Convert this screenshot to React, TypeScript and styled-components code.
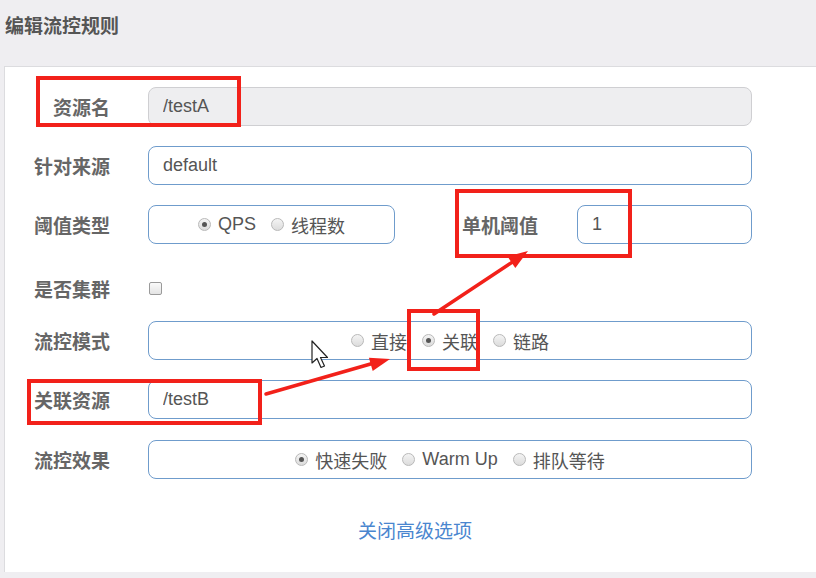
import React from "react";
import styled, { createGlobalStyle } from "styled-components";

const FONT = `"Liberation Sans", "Noto Sans CJK SC", sans-serif`;

const GlobalStyle = createGlobalStyle`
    html, body {
        margin: 0;
        padding: 0;
        background-color: #efeef1;
        overflow: hidden;
    }
    * {
        box-sizing: border-box;
    }
`;

const Page = styled.div`
    position: relative;
    width: 816px;
    height: 578px;
    font-family: ${FONT};
    background-color: #efeef1;
`;

const Header = styled.div`
    height: 66px;
    padding: 16px 5px 0;
`;

const Title = styled.h3`
    margin: 0;
    font-size: 19px;
    line-height: 22px;
    font-weight: 700;
    color: #555;
`;

const Panel = styled.div`
    margin-left: 4px;
    height: 506px;
    background-color: #fff;
    border-top: 1px solid #dcdcdf;
    border-left: 1px solid #dcdcdf;
`;

const Form = styled.form`
    padding-top: 20px;
    padding-right: 64px;
`;

const Row = styled.div<{ $height?: number; $gap?: number }>`
    display: grid;
    grid-template-columns: 105px 1fr;
    column-gap: 38px;
    align-items: center;
    height: ${(p) => p.$height ?? 39}px;
    margin-bottom: ${(p) => p.$gap ?? 20}px;
`;

const Label = styled.label`
    text-align: right;
    font-size: 19px;
    font-weight: 700;
    color: #666;
    white-space: nowrap;
`;

const Input = styled.input<{ $readOnly?: boolean }>`
    width: 100%;
    height: 39px;
    padding: 0 14px;
    border-radius: 8px;
    border: 1px solid ${(p) => (p.$readOnly ? "#cfcfd2" : "#6f9ccc")};
    background-color: ${(p) => (p.$readOnly ? "#eeeef0" : "#fff")};
    font-family: ${FONT};
    font-size: 18px;
    color: #555;
    outline: none;
`;

const SplitRow = styled.div`
    display: grid;
    grid-template-columns: 247px 1fr 175px;
    column-gap: 39px;
    align-items: center;
`;

const RadioBox = styled.div`
    height: 39px;
    border-radius: 8px;
    border: 1px solid #6f9ccc;
    display: flex;
    align-items: center;
    justify-content: center;
    gap: 15px;
`;

const RadioItem = styled.span`
    display: inline-flex;
    align-items: center;
    gap: 7px;
    font-size: 18px;
    color: #555;
`;

const RadioDot = styled.span<{ $checked?: boolean }>`
    position: relative;
    width: 13px;
    height: 13px;
    border-radius: 50%;
    border: 1px solid #b9b9b9;
    background: linear-gradient(#f4f4f4, #dcdcdc);

    &::after {
        content: "";
        display: ${(p) => (p.$checked ? "block" : "none")};
        position: absolute;
        left: 3px;
        top: 3px;
        width: 5px;
        height: 5px;
        border-radius: 50%;
        background-color: #555;
    }
`;

const CheckBox = styled.span`
    width: 13px;
    height: 13px;
    border-radius: 2px;
    border: 1px solid #9a9a9a;
    background: linear-gradient(#fafafa, #e4e4e4);
    margin-left: 1px;
`;

const LinkRow = styled.div`
    text-align: center;
    padding-left: 9px;
    margin-top: 41px;
`;

const Link = styled.a`
    font-size: 19px;
    line-height: 24px;
    color: #4a86cf;
    text-decoration: none;
`;

const RedBox = styled.div<{ $x: number; $y: number; $w: number; $h: number }>`
    position: absolute;
    left: ${(p) => p.$x}px;
    top: ${(p) => p.$y}px;
    width: ${(p) => p.$w}px;
    height: ${(p) => p.$h}px;
    border: 4px solid #f2211a;
    pointer-events: none;
`;

const Overlay = styled.svg`
    position: absolute;
    left: 0;
    top: 0;
    pointer-events: none;
`;

type Option = { text: string; checked?: boolean };

function Radios({ options }: { options: Option[] }) {
    return (
        <RadioBox>
            {options.map((o) => (
                <RadioItem key={o.text}>
                    <RadioDot $checked={o.checked} />
                    {o.text}
                </RadioItem>
            ))}
        </RadioBox>
    );
}

export default function App() {
    return (
        <Page>
            <GlobalStyle />
            <Header>
                <Title>编辑流控规则</Title>
            </Header>
            <Panel>
                <Form>
                    <Row>
                        <Label>资源名</Label>
                        <Input $readOnly readOnly value="/testA" />
                    </Row>
                    <Row>
                        <Label>针对来源</Label>
                        <Input readOnly value="default" />
                    </Row>
                    <Row>
                        <Label>阈值类型</Label>
                        <SplitRow>
                            <Radios options={[{ text: "QPS", checked: true }, { text: "线程数" }]} />
                            <Label>单机阈值</Label>
                            <Input readOnly value="1" />
                        </SplitRow>
                    </Row>
                    <Row $height={48} $gap={9}>
                        <Label>是否集群</Label>
                        <CheckBox />
                    </Row>
                    <Row>
                        <Label>流控模式</Label>
                        <Radios options={[{ text: "直接" }, { text: "关联", checked: true }, { text: "链路" }]} />
                    </Row>
                    <Row $gap={21}>
                        <Label>关联资源</Label>
                        <Input readOnly value="/testB" />
                    </Row>
                    <Row>
                        <Label>流控效果</Label>
                        <Radios
                            options={[
                                { text: "快速失败", checked: true },
                                { text: "Warm Up" },
                                { text: "排队等待" },
                            ]}
                        />
                    </Row>
                </Form>
                <LinkRow>
                    <Link href="#">关闭高级选项</Link>
                </LinkRow>
            </Panel>

            {/* annotations drawn over the form */}
            <RedBox $x={36} $y={76} $w={205} $h={51} />
            <RedBox $x={455} $y={189} $w={177} $h={69} />
            <RedBox $x={407} $y={309} $w={73} $h={62} />
            <RedBox $x={27} $y={379} $w={235} $h={46} />
            <Overlay width="816" height="578" viewBox="0 0 816 578">
                <line x1="266" y1="394" x2="374" y2="363" stroke="#f2211a" strokeWidth="3.5" strokeLinecap="round" />
                <polygon points="390,359 372.7,371.1 368.9,357.7" fill="#f2211a" />
                <line x1="434" y1="314" x2="514" y2="261" stroke="#f2211a" strokeWidth="3.5" strokeLinecap="round" />
                <polygon points="528,251 515.3,268 507.5,256.4" fill="#f2211a" />
                <path
                    d="M312 341 L312 363 L317 358.5 L321 367.5 L324.5 366 L320.5 357.5 L327.5 357.5 Z"
                    fill="#fff"
                    stroke="#222"
                    strokeWidth="1.2"
                    strokeLinejoin="round"
                />
            </Overlay>
        </Page>
    );
}
